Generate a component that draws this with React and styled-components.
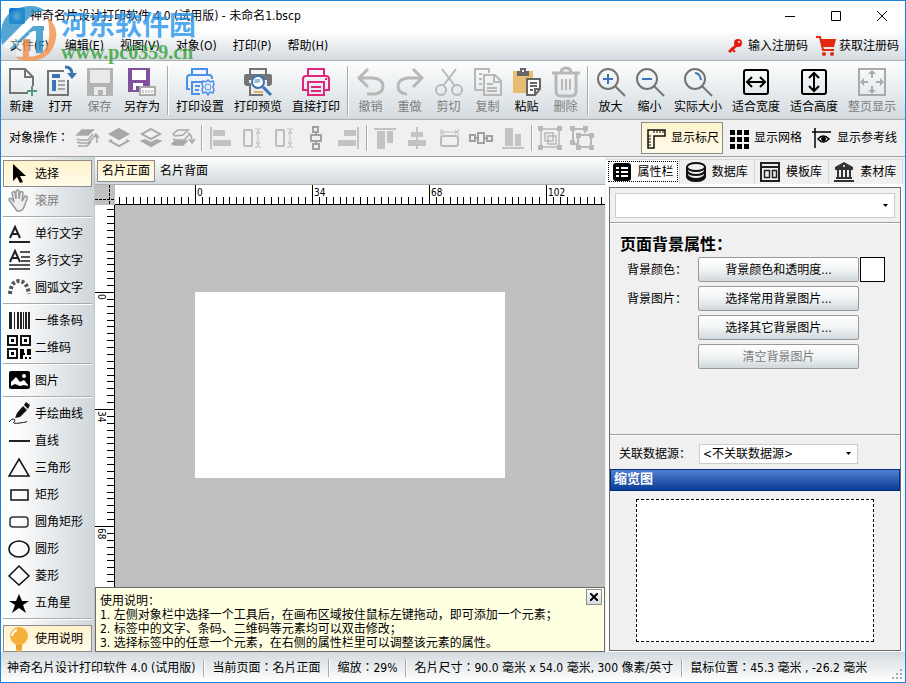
import React from 'react';
import styled, { createGlobalStyle, css } from 'styled-components';

const GlobalStyle = createGlobalStyle`
  * {
    box-sizing: border-box;
  }

  body {
    margin: 0;
    background: #f0f0f0;
  }

  body, button, select {
    font-family: "DejaVu Sans Condensed", "Noto Sans CJK SC", sans-serif;
    font-size: 12px;
    line-height: 16px;
    color: #000;
  }

  button {
    margin: 0;
    padding: 0;
    border: 0;
    background: none;
    white-space: nowrap;
  }

  svg {
    display: block;
    flex: none;
  }
`;

const bar = 'linear-gradient(#fdfefe, #d3dade)';
const picked = css`
  border: 1px solid #8c8c8c;
  background: linear-gradient(#fff3cc, #fffbe9);
`;

/* this family sets the full-width colon in the middle of its cell */
const centredColon = css`
  font-family: "DejaVu Sans Condensed", "Noto Sans CJK TC", sans-serif;
`;

const Window = styled.div`
  position: relative;
  display: flex;
  flex-direction: column;
  min-height: 100vh;
  border: 1px solid #1c83d8;
  background: #f0f0f0;
`;

const TitleBar = styled.header`
  display: flex;
  align-items: center;
  height: 30px;
  padding-left: 8px;
  background: #fff;
`;

const Title = styled.h1`
  flex: 1;
  margin: 0 0 0 5px;
  font-size: 12px;
  font-weight: normal;
  line-height: 16px;
`;

const WindowButton = styled.button`
  display: flex;
  align-items: center;
  justify-content: center;
  width: 46px;
  height: 30px;
`;

const MenuBar = styled.nav`
  display: flex;
  align-items: center;
  gap: 16px;
  height: 30px;
  padding: 0 6px 0 9px;
  border-bottom: 1px solid #adadad;
  background: linear-gradient(#fff, #d3dade);
`;

const Register = styled.div`
  display: flex;
  gap: 8px;
  margin-left: auto;
`;

const RegisterButton = styled.button`
  display: flex;
  align-items: center;
  gap: 3px;
`;

const ToolBar = styled.div`
  display: flex;
  align-items: flex-start;
  height: 59px;
  padding: 7px 0 6px 1px;
  border-bottom: 1px solid #adadad;
  background: ${bar};
`;

const ToolButton = styled.button`
  display: flex;
  flex-direction: column;
  align-items: center;
  gap: 3px;
  width: ${({ $chars }) => ({ 2: 39, 3: 46, 4: 58 })[$chars]}px;

  &:disabled {
    color: #7d7d7d;
  }
`;

const Divider = styled.div`
  align-self: center;
  width: ${({ $width }) => $width}px;
  height: ${({ $height }) => $height}px;
  border-left: 2px solid transparent;
  background: linear-gradient(90deg, #a9a9a9 1px, #fff 1px, #fff 2px, transparent 2px);
  background-clip: padding-box;
`;

const ActionBar = styled.div`
  display: flex;
  align-items: center;
  height: 37px;
  padding: 0 4px 0 8px;
  border-bottom: 1px solid #a0a0a0;
`;

const ActionLabel = styled.span`
  ${centredColon}
  width: 62px;
`;

const ActionButton = styled.button`
  display: flex;
  justify-content: center;
  width: 32px;
`;

const Toggles = styled.div`
  display: flex;
  gap: 1px;
  margin-left: auto;
`;

const Toggle = styled.button`
  display: flex;
  align-items: center;
  gap: 4px;
  height: 32px;
  padding: 0 3px;
  border: 1px solid transparent;
  ${({ $on }) => $on && picked}
`;

const Main = styled.main`
  display: flex;
  flex: 1;
`;

const SideBar = styled.aside`
  display: flex;
  flex-direction: column;
  width: 94px;
  padding: 3px 2px 0;
  border-right: 1px solid #c4c4c4;
  background: linear-gradient(90deg, #fff 10%, #cfd6da);
`;

const SideButton = styled.button`
  display: flex;
  align-items: center;
  gap: 4px;
  height: 27px;
  padding-left: 4px;
  border: 1px solid transparent;
  ${({ $on }) => $on && picked}
  margin-top: ${({ $last }) => ($last ? 'auto' : 0)};

  &:disabled {
    color: #7d7d7d;
  }
`;

const SideDivider = styled.div`
  height: 6px;
  background: linear-gradient(transparent 2px, #aaa 2px, #aaa 3px, #fff 3px, #fff 4px, transparent 4px);
`;

const Workspace = styled.section`
  display: flex;
  flex: 1;
  flex-direction: column;
  min-width: 0;
`;

const PageTabs = styled.div`
  display: flex;
  align-items: center;
  height: 28px;
  padding: 1px 2px 0;
  border-bottom: 1px solid #adadad;
  background: ${bar};
`;

const PageTab = styled.button`
  height: 22px;
  padding: 0 4px;
  border: 1px solid transparent;
  ${({ $on }) => $on && picked}
`;

const Board = styled.div`
  display: grid;
  flex: 1;
  grid-template: 20px 1fr / 20px 1fr;
  background: #c0c0c0;
`;

const RulerBox = styled.div`
  position: relative;
  overflow: hidden;
  background: #fff;
  border: 0 solid #000;
  border-width: ${({ $vertical }) => ($vertical ? '0 1px 0 0' : '0 0 1px')};
`;

/* the ticks run on past the visible end, so they must not size the box */
const Scale = styled.svg`
  position: absolute;
  top: 0;
  left: 0;
  width: 100%;
  height: 100%;
  font-family: "DejaVu Sans Condensed", sans-serif;
  font-size: 10px;
`;

const Canvas = styled.div`
  padding: 87px 100px 0 80px;
`;

const Paper = styled.div`
  height: 186px;
  background: #fff;
`;

const Help = styled.section`
  display: flex;
  justify-content: space-between;
  height: 65px;
  padding: 6px 2px 0 4px;
  border: 1px solid #6b6b6b;
  background: #ffffe1;
  line-height: 14px;
  white-space: nowrap;
`;

const HelpClose = styled.button`
  display: flex;
  align-items: center;
  justify-content: center;
  width: 16px;
  height: 16px;
  margin-top: -5px;
  border: 1px solid #8e8f8f;
  background: ${bar};
`;

const HelpText = styled.div`
  p {
    margin: 0;
  }
`;

const Inspector = styled.aside`
  display: flex;
  flex-direction: column;
  width: 300px;
  padding: 2px 2px 0 1px;
`;

const InspectorTabs = styled.div`
  display: flex;
  height: 25px;
`;

const InspectorTab = styled.button`
  display: flex;
  flex: 1;
  align-items: center;
  justify-content: center;
  gap: 6px;
  border: 1px solid #d9d9d9;
  border-width: 1px 1px 0 0;
  background: #f0f0f0;

  &[aria-selected="true"] {
    outline: 1px dotted #000;
    outline-offset: -3px;
    background: #fff;
  }
`;

const InspectorPage = styled.div`
  display: flex;
  flex: 1;
  padding: 3px 2px 1px 3px;
  background: #fff;
`;

const InspectorBody = styled.div`
  display: flex;
  flex: 1;
  flex-direction: column;
  border: 1px solid #6b6b6b;
  background: #f0f0f0;
`;

const ObjectPicker = styled.div`
  padding: 5px 5px 4px;
  border-bottom: 1px solid #a0a0a0;
`;

const SelectBox = styled.div`
  display: grid;
  align-items: center;
  width: ${({ $width }) => $width};
  height: ${({ $height }) => $height}px;
  border: 1px solid #ccc;
  background: #fff;

  > * {
    grid-area: 1 / 1;
  }

  svg {
    justify-self: end;
    margin-right: 5px;
    pointer-events: none;
  }
`;

const Select = styled.select`
  width: 100%;
  height: 100%;
  padding: 0 3px;
  border: 0;
  background: none;
  appearance: none;
`;

const Properties = styled.div`
  flex: 1;
  padding: 11px 10px 0;
  border-top: 1px solid #fff;
`;

const Heading = styled.h2`
  margin: 0 0 2px;
  font-size: 16px;
  line-height: 20px;
`;

const PropertyGrid = styled.div`
  display: grid;
  grid-template-columns: 70px 161px 25px;
  align-items: center;
  row-gap: 4px;
  column-gap: 1px;
  padding-left: 7px;
`;

const PropertyLabel = styled.label`
  grid-column: 1;
`;

const PushButton = styled.button`
  grid-column: 2;
  height: 25px;
  border: 1px solid #999;
  border-radius: 2px;
  background: linear-gradient(#fff, #f1f4f5 50%, #d0d8dc);

  &:disabled {
    color: #7d7d7d;
  }
`;

const Swatch = styled.button`
  width: 25px;
  height: 25px;
  border: 1px solid #000;
  background: #fff;
`;

const DataSource = styled.div`
  display: flex;
  align-items: center;
  gap: 8px;
  height: 35px;
  padding: 3px 9px 0;
  border-top: 1px solid #a0a0a0;
  box-shadow: inset 0 1px #fff;
`;

const PreviewTitle = styled.h2`
  height: 22px;
  margin: 0;
  padding-left: 3px;
  border: 1px solid #002d80;
  background: linear-gradient(#5080d0, #0a3c96);
  font-size: 13px;
  line-height: 18px;
  color: #fff;
`;

const Preview = styled.div`
  padding: 8px 26px;
`;

const PreviewPaper = styled.div`
  height: 143px;
  border: 1px dashed #000;
  background: #fff;
`;

const StatusBar = styled.footer`
  ${centredColon}
  display: flex;
  align-items: center;
  gap: 6px;
  height: 30px;
  padding: 2px 0 0 6px;
  background: linear-gradient(#d3dade, #fff);
  white-space: nowrap;
`;

const Grip = styled.div`
  align-self: flex-end;
  margin: 0 2px 2px auto;
`;

const Brand = styled.div`
  position: absolute;
  top: 5px;
  left: 0;
  display: flex;
  align-items: center;
  gap: 4px;
  pointer-events: none;
  white-space: nowrap;
`;

const BrandName = styled.div`
  padding-top: 4px;
  font-size: 27px;
  font-weight: bold;
  line-height: 32px;
  color: rgba(36, 146, 232, 0.8);
`;

const BrandSite = styled.div`
  font-family: "Liberation Serif", serif;
  font-size: 20px;
  font-weight: bold;
  line-height: 20px;
  color: rgba(50, 160, 50, 0.8);
`;

const gray = '#747474';
const pale = '#b8b8b8';
const blue = '#3b74b4';

const Printer = ({ color }) => (
  <g fill="none" stroke={color} strokeWidth="2">
    <path d="M6 8V1h16v7" />
    <path d="M6 22H1V11q0-3 3-3h20q3 0 3 3v11h-5" />
  </g>
);

const Magnifier = ({ children }) => (
  <g fill="none" stroke={gray} strokeWidth="2">
    <circle cx="11" cy="11" r="10" />
    <path d="M18 18l10 10" />
    <g stroke={blue}>{children}</g>
  </g>
);

const toolIcons = {
  fresh: (
    <g fill="none" stroke={gray} strokeWidth="2">
      <path d="M20 25H2V1h15l8 8v9M17 1v8h8" />
      <path d="M24 18v10M19 23h10" stroke="#4d9d7c" />
    </g>
  ),
  open: (
    <g fill="none" stroke={gray} strokeWidth="2">
      <path d="M17 3H1v24h20V12" />
      <path d="M5 7h8M5 9h8M6 12v11M8 12v11" stroke={blue} />
      <path d="M11 13h7M11 17h7M11 21h7" stroke="#a6a6a6" />
      <path d="M18-1q7 0 7 7" stroke={blue} strokeWidth="3" />
      <path d="M20 5h10l-5 6z" fill={blue} stroke="none" />
    </g>
  ),
  save: (
    <g fill="#b3b3b3">
      <path d="M1 0h26v28H1z" />
      <path d="M4 2h20v13H4zM8 19h12v8h-3v-5h-5v5H8z" fill="#e8eaeb" />
    </g>
  ),
  saveAs: (
    <g fill="#7f519e">
      <path d="M0 0h22v24H0z" />
      <path d="M4 2h14v10H4zM5 15h10v7h-4v-4H8v4H5z" fill="#fff" />
      <path d="M11 18h17v10H11z" fill="#aaa" />
      <path d="M13 20h13v6H13z" fill="#fff" />
      <path d="M15 22v3M18 22v3M21 22v3M24 22v3" stroke="#999" strokeWidth="1" />
    </g>
  ),
  printSetup: (
    <g fill="none" stroke="#4a91ec" strokeWidth="2">
      <path d="M6 7V1h15v6M14 26H6V14h10M4 21H1V10q0-3 3-3h19q3 0 3 3v1M9 18h5M9 22h4" />
      <path d="M22 12l2 2 3-1 1 3-1 3 1 3-1 3-3-1-2 3-2-3-3 1-1-3 1-3-1-3 1-3 3 1z" strokeWidth="1.500" />
      <circle cx="22" cy="19" r="3" strokeWidth="1" />
    </g>
  ),
  printPreview: (
    <g fill="none" stroke={gray}>
      <path d="M2 6h24q2 0 2 2v8l-2 2h-3v-6H5v6H2l-2-2V8q0-2 2-2z" fill={gray} stroke="none" />
      <path d="M6 8V1h16v7M6 15v12h13" strokeWidth="2" />
      <path d="M10 24h9" stroke="#e5b467" strokeWidth="2" />
      <circle cx="14" cy="14" r="6" fill="#fff" stroke={blue} strokeWidth="2" />
      <path d="M11 11h6l-2 4h-5z" fill="#9bbad8" stroke="none" />
      <path d="M19 19l8 8" stroke={blue} strokeWidth="3" />
    </g>
  ),
  print: (
    <g>
      <Printer color="#e1257f" />
      <path d="M6 14h16v13H6zM9 19h10M9 23h10" fill="none" stroke="#e1257f" strokeWidth="2" />
      <path d="M23 11h2" stroke="#e1257f" strokeWidth="2" />
    </g>
  ),
  undo: <path d="M11 1L2 10l9 9M3 10h13q10 1 10 8t-8 8h-8" fill="none" stroke={pale} strokeWidth="3" />,
  redo: <path d="M17 1l9 9-9 9M25 10H12Q2 11 2 18t8 8h1" fill="none" stroke={pale} strokeWidth="3" />,
  cut: (
    <g fill="none" stroke={pale} strokeWidth="2">
      <path d="M7 1l13 17M21 1L8 18" />
      <circle cx="6" cy="22" r="5" />
      <circle cx="22" cy="22" r="5" />
    </g>
  ),
  copy: (
    <g fill="none" stroke={pale} strokeWidth="2">
      <path d="M9 22H1V1h14v4M5 6h3M5 11h3M5 16h3" />
      <path d="M10 7h11l6 6v14H10zM20 7v7h7M13 16h6M13 20h10M13 23h10" />
    </g>
  ),
  paste: (
    <g>
      <path d="M0 3h20v22H0z" fill="#e8bd72" />
      <path d="M4 3h3V0h6v3h3v5H4z" fill="#666" />
      <path d="M9 2h2v2H9z" fill="#fff" />
      <path d="M14 11h13v10l-5 6h-8z" fill="#fff" stroke="#666" strokeWidth="2" />
      <path d="M17 15h7M17 18h7M17 22h3M22 27v-6h5" fill="none" stroke="#666" strokeWidth="2" />
    </g>
  ),
  trash: (
    <g fill="none" stroke={pale} strokeWidth="3">
      <path d="M0 5h28M9 5q0-5 5-5t5 5M4 6v17q0 5 5 5h10q5 0 5-5V6" />
      <path d="M10 11v11M14 11v11M18 11v11" strokeWidth="2" />
    </g>
  ),
  zoomIn: <Magnifier><path d="M6 11h10M11 6v10" /></Magnifier>,
  zoomOut: <Magnifier><path d="M6 11h10" /></Magnifier>,
  actual: <Magnifier><path d="M11 5q5 0 6 7" /></Magnifier>,
  fitWidth: (
    <g fill="none" stroke="#000" strokeWidth="2">
      <rect x="2" y="2" width="24" height="24" rx="2" />
      <path d="M6 14h16M10 9l-5 5 5 5M18 9l5 5-5 5" />
    </g>
  ),
  fitHeight: (
    <g fill="none" stroke="#000" strokeWidth="2">
      <rect x="2" y="2" width="24" height="24" rx="2" />
      <path d="M14 6v16M9 10l5-5 5 5M9 18l5 5 5-5" />
    </g>
  ),
  fitPage: (
    <g fill="none" stroke="#aaa" strokeWidth="2">
      <path d="M1 1h26v26H1z" />
      <path d="M14 4v6M14 18v6M4 14h6M18 14h6" />
      <path d="M14 2l4 4h-8zM14 26l4-4h-8zM2 14l4-4v8zM26 14l-4-4v8z" fill="#aaa" stroke="none" />
    </g>
  ),
};

const actionIcons = {
  front: (
    <g fill="none" stroke="#a8a8a8" strokeWidth="1.500">
      <path d="M2 9l5-5h11l-5 5z" fill="#a8a8a8" />
      <path d="M2 13l3 1h8l5-6M2 16l3 1h8l5-5M3 20h9l4-4M22 17q0-5-1-8M18 12l3-4 3 4" />
    </g>
  ),
  forward: (
    <g fill="none" stroke="#a8a8a8" strokeWidth="2">
      <path d="M12 3l9 5-9 5-9-5z" fill="#a8a8a8" />
      <path d="M5 14l-2 1 9 5 9-5-2-1" />
    </g>
  ),
  backward: (
    <g fill="none" stroke="#a8a8a8" strokeWidth="2">
      <path d="M12 3l9 5-9 5-9-5z" />
      <path d="M3 15l3-1 6 3 6-3 3 1-9 5z" fill="#a8a8a8" />
    </g>
  ),
  back: (
    <g fill="none" stroke="#a8a8a8" strokeWidth="1.500">
      <path d="M2 8l5-4h10l-5 5-8 1zM2 13l3 1h8l5-5" />
      <path d="M1 18l3-3h12l-4 4H4z" fill="#a8a8a8" />
      <path d="M17 7q4 2 4 8M18 13l3 4 3-4" />
    </g>
  ),
  left: <path d="M2 1h2v22H2zM5 4h12v6H5zM5 14h18v6H5z" fill="#c3c3c3" />,
  sameWidth: (
    <g fill="none" stroke="#bcbcbc">
      <rect x="4" y="4" width="8" height="16" rx="1" strokeWidth="2" />
      <path d="M18 4v16M15 3h6M15 21h6M16 8l2-3 2 3M16 16l2 3 2-3" />
    </g>
  ),
  middleV: (
    <path d="M9 1h5v5H9zM7 9h10v6H7zM9 18h6v5H9zM12 6v3M12 15v3" fill="none" stroke="#a0a0a0" strokeWidth="2" />
  ),
  right: <path d="M21 1h2v22h-2zM8 4h12v6H8zM2 14h18v6H2z" fill="#c3c3c3" />,
  top: <path d="M1 2h22v2H1zM4 5h8v18H4zM14 5h6v12h-6z" fill="#c3c3c3" />,
  center: <path d="M11 1h2v22h-2zM6 6h12v5H6zM3 14h18v6H3z" fill="#c3c3c3" />,
  sameHeight: (
    <g fill="none" stroke="#bbb">
      <rect x="4" y="10" width="17" height="10" rx="2" strokeWidth="2" />
      <path d="M4 3v6M21 3v6M5 6h15M7 4L5 6l2 2M18 4l2 2-2 2" />
    </g>
  ),
  middleH: (
    <path d="M1 9h5v6H1zM9 7h6v10H9zM18 10h5v5h-5zM6 12h3M15 12h3" fill="none" stroke="#a0a0a0" strokeWidth="2" />
  ),
  bottom: <path d="M1 21h22v2H1zM4 2h8v18H4zM14 8h6v12h-6z" fill="#c3c3c3" />,
  group: (
    <g fill="none" stroke={pale}>
      <path d="M3 3h18v18H3zM7 7h8v8H7zM10 10h8v8h-8z" strokeWidth="1.500" />
      <path d="M0 0h5v5H0zM19 0h5v5h-5zM0 19h5v5H0zM19 19h5v5h-5z" fill={pale} stroke="none" />
    </g>
  ),
  ungroup: (
    <g fill="none" stroke={pale} strokeWidth="2">
      <path d="M7 18H3V3h12v4M8 9h13v12H8z" />
      <path d="M0 0h5v5H0zM13 0h5v5h-5zM0 14h5v5H0zM6 7h5v5H6zM19 7h5v5h-5zM6 19h5v5H6zM19 19h5v5h-5z" fill={pale} stroke="none" />
    </g>
  ),
};

const toggleIcons = {
  ruler: (
    <g fill="none" stroke="#111">
      <path d="M3 3h17v6H9v12H3z" strokeWidth="1.500" />
      <path d="M9 3v3M12 3v3M15 3v3M18 3v3M3 9h3M3 12h3M3 15h3M3 18h3" />
    </g>
  ),
  grid: <path d="M2 3h5v5H2zM9 3h5v5H9zM16 3h5v5h-5zM2 10h5v5H2zM9 10h5v5H9zM16 10h5v5h-5zM2 17h5v5H2zM9 17h5v5H9zM16 17h5v5h-5z" />,
  guide: (
    <g fill="none" stroke="#000">
      <path d="M1 5h19" strokeWidth="1.500" />
      <path d="M4 1v20" strokeWidth="1.500" />
      <path d="M7 12q5-6 11 0-6 6-11 0z" strokeWidth="1.500" />
      <circle cx="12.500" cy="12" r="2" fill="#000" />
    </g>
  ),
};

const QrCorner = ({ x, y }) => (
  <g transform={`translate(${x} ${y})`}>
    <path d="M1 1h9v9H1z" fill="none" stroke="#111" strokeWidth="2" />
    <path d="M4 4h3v3H4z" />
  </g>
);

const sideIcons = {
  select: <path d="M5 2v17l4-4 3 6 3-1-3-6h6z" />,
  pan: (
    <path
      d="M7 19L1 11q0-3 3-1l2 3-2-9q2-3 3 0l1 6V2q2-2 3 0v8l1-7q3-1 3 1l-1 8 3-5q3 0 2 3l-3 8q-1 3-4 4H9z"
      fill="#eee"
      stroke="#999"
      strokeWidth="1.500"
    />
  ),
  text: (
    <g fill="none" stroke="#222" strokeWidth="2">
      <path d="M2 16L7 5l5 11M4 12h6" />
      <path d="M1 20h21" />
    </g>
  ),
  lines: (
    <g fill="none" stroke="#222">
      <path d="M2 13L7 2l5 11M4 9h6" strokeWidth="2" />
      <path d="M12 3h10M13 8h9M13 12h9M1 16h21M1 20h21" strokeWidth="1.500" />
    </g>
  ),
  arc: <path d="M2 18Q3 5 11 5t10 13" fill="none" stroke="#555" strokeWidth="4" strokeDasharray="3 2" />,
  barcode: (
    <path d="M1 3h3v17H1zM6 3h1v17H6zM9 3h2v17H9zM12 3h2v17h-2zM15 3h1v17h-1zM17 3h2v17h-2zM20 3h2v17h-2z" fill="#222" />
  ),
  qr: (
    <g>
      <QrCorner x="-1" y="-1" />
      <QrCorner x="12" y="-1" />
      <QrCorner x="-1" y="12" />
      <path d="M12 13h4v4h3v-4h4v6h-4v-2h-2v2h-2v4h-3zM17 21h2v2h-2zM21 21h2v2h-2z" />
    </g>
  ),
  image: (
    <g>
      <rect x="1" y="2" width="21" height="18" rx="2" />
      <path d="M3 17v-4l5-5 4 5 4-2 4 5v1l-4-1-4 1-5-2z" fill="#fff" />
      <circle cx="16" cy="7" r="2" fill="#fff" />
    </g>
  ),
  brush: (
    <g fill="#111">
      <path d="M7 16l2-5 6-7 4 4-7 7zM16 3l2-3 4 3-2 4z" />
      <path d="M1 20q3-4 5-3t0 3 6 1 7-2" fill="none" stroke="#111" />
    </g>
  ),
  line: <path d="M1 12h21" stroke="#222" strokeWidth="2" />,
  triangle: <path d="M11 3l10 17H1z" fill="none" stroke="#111" strokeWidth="1.500" />,
  rect: <path d="M3 7h17v10H3z" fill="none" stroke="#111" strokeWidth="1.500" />,
  roundRect: <rect x="2" y="7" width="18" height="10" rx="3" fill="none" stroke="#333" strokeWidth="1.500" />,
  circle: <ellipse cx="11" cy="12" rx="10" ry="8" fill="none" stroke="#111" strokeWidth="1.500" />,
  diamond: <path d="M11 2l10 10-10 9L1 12z" fill="none" stroke="#111" strokeWidth="1.500" />,
  star: <path d="M11 3l3 7h7l-6 4 3 8-7-5-7 5 3-8-6-4h7z" />,
  bulb: (
    <g fill="#f6b03c">
      <circle cx="11" cy="9" r="9" />
      <path d="M6 14h10l-2 5H8zM8 19h6v4l-2 2h-2l-2-2z" />
      <path d="M4 9q1-5 5-6" fill="none" stroke="#fff" strokeWidth="2" />
      <path d="M8 19h6M8 21h6" stroke="#d99428" />
    </g>
  ),
};

const tabIcons = {
  list: (
    <g>
      <rect x="1" y="1" width="18" height="18" rx="3" />
      <path d="M4 6h3M9 6h7M4 10h3M9 10h7M4 14h3M9 14h7" stroke="#fff" strokeWidth="2" />
    </g>
  ),
  database: (
    <g fill="none" stroke="#111" strokeWidth="2">
      <ellipse cx="10" cy="5" rx="9" ry="4" />
      <path d="M1 5v10q1 4 9 4t9-4V5M1 9q2 4 9 4t9-4M1 13q2 4 9 4t9-4" />
    </g>
  ),
  template: (
    <g fill="none" stroke="#222">
      <path d="M1 1h18v18H1zM1 5h18" strokeWidth="2" />
      <path d="M4.500 8.500h5v7h-5zM12.500 8.500h4v7h-4z" strokeWidth="1.500" />
    </g>
  ),
  bank: (
    <g fill="#333">
      <path d="M10 0l9 5v3H1V5zM2 15h16v2H2zM0 18h20v2H0z" />
      <path d="M4 8v7M8 8v7M12 8v7M16 8v7" stroke="#333" strokeWidth="2" />
      <circle cx="10" cy="4" r="1" fill="#fff" />
    </g>
  ),
};

const Icon = ({ size, children }) => (
  <svg width={size} height={size} viewBox={`0 0 ${size} ${size}`} overflow="visible" aria-hidden="true">
    {children}
  </svg>
);

const Caret = () => (
  <svg width="7" height="4" viewBox="0 0 7 4">
    <path d="M1 0h5L3.500 3z" />
  </svg>
);

const toolGroups = [
  [['fresh', '新建'], ['open', '打开'], ['save', '保存', true], ['saveAs', '另存为']],
  [['printSetup', '打印设置'], ['printPreview', '打印预览'], ['print', '直接打印']],
  [
    ['undo', '撤销', true],
    ['redo', '重做', true],
    ['cut', '剪切', true],
    ['copy', '复制', true],
    ['paste', '粘贴'],
    ['trash', '删除', true],
  ],
  [
    ['zoomIn', '放大'],
    ['zoomOut', '缩小'],
    ['actual', '实际大小'],
    ['fitWidth', '适合宽度'],
    ['fitHeight', '适合高度'],
    ['fitPage', '整页显示', true],
  ],
];

const actionGroups = [
  [['front', '移到最前'], ['forward', '上移一层'], ['backward', '下移一层'], ['back', '移到最后']],
  [['left', '左对齐'], ['sameWidth', '等高'], ['sameWidth', '等间距'], ['middleV', '垂直分布'], ['right', '右对齐']],
  [['top', '顶对齐'], ['center', '居中'], ['sameHeight', '等宽'], ['middleH', '水平分布'], ['bottom', '底对齐']],
  [['group', '组合'], ['ungroup', '取消组合']],
];

const sideGroups = [
  [['select', '选择'], ['pan', '滚屏', true]],
  [['text', '单行文字'], ['lines', '多行文字'], ['arc', '圆弧文字']],
  [['barcode', '一维条码'], ['qr', '二维码']],
  [['image', '图片']],
  [
    ['brush', '手绘曲线'],
    ['line', '直线'],
    ['triangle', '三角形'],
    ['rect', '矩形'],
    ['roundRect', '圆角矩形'],
    ['circle', '圆形'],
    ['diamond', '菱形'],
    ['star', '五角星'],
  ],
];

const statusItems = [
  '神奇名片设计打印软件 4.0 (试用版)',
  '当前页面：名片正面',
  '缩放：29%',
  '名片尺寸：90.0 毫米 x 54.0 毫米, 300 像素/英寸',
  '鼠标位置：45.3 毫米 , -26.2 毫米',
];

const MAJOR = 117;
const PER_MAJOR = 17;

const Ruler = ({ vertical, origin, labels }) => {
  const ticks = [];
  for (let i = -12; i < 300; i += 1) {
    const at = origin + Math.round((i * MAJOR) / PER_MAJOR);
    const major = i >= 0 && i % PER_MAJOR === 0;
    ticks.push({ i, at, major });
  }
  return (
    <RulerBox $vertical={vertical}>
      <Scale shapeRendering="crispEdges">
        {ticks.map(({ i, at, major }) => (
          <g key={i}>
            {vertical
              ? <rect x={major ? 0 : 12} y={at} width="20" height="1" />
              : <rect x={at} y={major ? 0 : 12} width="1" height="20" />}
            {major && i < labels * PER_MAJOR && (
              <text transform={vertical ? `translate(3 ${at + 2}) rotate(90)` : `translate(${at + 2} 11)`}>
                {i * 2}
              </text>
            )}
          </g>
        ))}
      </Scale>
    </RulerBox>
  );
};

const Groups = ({ groups, divider, render }) =>
  groups.map((group, index) => (
    <React.Fragment key={index}>
      {index > 0 && divider}
      {group.map(render)}
    </React.Fragment>
  ));

export default () => (
  <Window>
    <GlobalStyle />
    <TitleBar>
      <svg width="16" height="16" viewBox="0 0 16 16">
        <rect width="16" height="16" rx="2" fill="#1274d8" />
        <circle cx="8" cy="8" r="5" fill="#6cb8f0" />
        <path d="M6 6h4v3l-2 3-2-3z" fill="#fff" />
      </svg>
      <Title>神奇名片设计打印软件 4.0 (试用版) - 未命名1.bscp</Title>
      <WindowButton aria-label="最小化">
        <svg width="10" height="10"><path d="M0 5.500h10" stroke="#000" /></svg>
      </WindowButton>
      <WindowButton aria-label="最大化">
        <svg width="10" height="10"><path d="M.5.5h9v9h-9z" fill="none" stroke="#000" /></svg>
      </WindowButton>
      <WindowButton aria-label="关闭">
        <svg width="10" height="10"><path d="M0 0l10 10M10 0L0 10" stroke="#000" /></svg>
      </WindowButton>
    </TitleBar>

    <MenuBar>
      {['文件(F)', '编辑(E)', '视图(V)', '对象(O)', '打印(P)', '帮助(H)'].map(name => (
        <button key={name}>{name}</button>
      ))}
      <Register>
        <RegisterButton>
          <svg width="18" height="16" viewBox="0 0 18 16">
            <path d="M2 14l9-8" stroke="#e8190c" strokeWidth="3" />
            <path d="M4 10l4 4" stroke="#e8190c" strokeWidth="2" />
            <circle cx="11" cy="5" r="4" fill="#e8190c" />
            <circle cx="12" cy="4" r="1" fill="#fff" />
          </svg>
          输入注册码
        </RegisterButton>
        <RegisterButton>
          <svg width="20" height="20" viewBox="0 0 20 20">
            <path d="M0 1h4l3 13h11" fill="none" stroke="#e02a10" strokeWidth="2" />
            <path d="M4 3h16l-2 8H6z" fill="#e02a10" />
            <circle cx="8" cy="18" r="2" fill="#e02a10" />
            <circle cx="16" cy="18" r="2" fill="#e02a10" />
          </svg>
          获取注册码
        </RegisterButton>
      </Register>
    </MenuBar>

    <ToolBar>
      <Groups
        groups={toolGroups}
        divider={<Divider $width={6} $height={49} />}
        render={([icon, name, off]) => (
          <ToolButton key={name} $chars={name.length} disabled={off}>
            <Icon size={28}>{toolIcons[icon]}</Icon>
            {name}
          </ToolButton>
        )}
      />
    </ToolBar>

    <ActionBar>
      <ActionLabel>对象操作：</ActionLabel>
      <Groups
        groups={actionGroups}
        divider={<Divider $width={5} $height={26} />}
        render={([icon, name]) => (
          <ActionButton key={name} aria-label={name} disabled>
            <Icon size={24}>{actionIcons[icon]}</Icon>
          </ActionButton>
        )}
      />
      <Toggles>
        <Toggle $on aria-pressed="true"><Icon size={22}>{toggleIcons.ruler}</Icon>显示标尺</Toggle>
        <Toggle aria-pressed="false"><Icon size={22}>{toggleIcons.grid}</Icon>显示网格</Toggle>
        <Toggle aria-pressed="false"><Icon size={22}>{toggleIcons.guide}</Icon>显示参考线</Toggle>
      </Toggles>
    </ActionBar>

    <Main>
      <SideBar>
        <Groups
          groups={sideGroups}
          divider={<SideDivider />}
          render={([icon, name, off]) => (
            <SideButton key={name} $on={icon === 'select'} disabled={off}>
              <Icon size={23}>{sideIcons[icon]}</Icon>
              {name}
            </SideButton>
          )}
        />
        <SideDivider />
        <SideButton $on $last>
          <Icon size={23}>{sideIcons.bulb}</Icon>
          使用说明
        </SideButton>
      </SideBar>

      <Workspace>
        <PageTabs role="tablist">
          <PageTab $on role="tab" aria-selected="true">名片正面</PageTab>
          <PageTab role="tab" aria-selected="false">名片背面</PageTab>
        </PageTabs>
        <Board>
          <svg width="20" height="20">
            <path d="M14.500 0v20M0 14.500h20" stroke="#000" strokeDasharray="3 1" />
          </svg>
          <Ruler origin={80} labels={4} />
          <Ruler vertical origin={87} labels={3} />
          <Canvas><Paper /></Canvas>
        </Board>
        <Help>
          <HelpText>
            <p>使用说明：</p>
            <p>1. 左侧对象栏中选择一个工具后，在画布区域按住鼠标左键拖动，即可添加一个元素；</p>
            <p>2. 标签中的文字、条码、二维码等元素均可以双击修改；</p>
            <p>3. 选择标签中的任意一个元素，在右侧的属性栏里可以调整该元素的属性。</p>
          </HelpText>
          <HelpClose aria-label="关闭说明">
            <svg width="8" height="8"><path d="M0 0l8 8M8 0L0 8" stroke="#000" strokeWidth="2" /></svg>
          </HelpClose>
        </Help>
      </Workspace>

      <Inspector>
        <InspectorTabs role="tablist">
          {[['list', '属性栏'], ['database', '数据库'], ['template', '模板库'], ['bank', '素材库']].map(([icon, name]) => (
            <InspectorTab key={name} role="tab" aria-selected={icon === 'list'}>
              <Icon size={20}>{tabIcons[icon]}</Icon>
              {name}
            </InspectorTab>
          ))}
        </InspectorTabs>
        <InspectorPage>
          <InspectorBody>
            <ObjectPicker>
              <SelectBox $width="100%" $height={25}>
                <Select aria-label="对象"><option /></Select>
                <Caret />
              </SelectBox>
            </ObjectPicker>
            <Properties>
              <Heading>页面背景属性：</Heading>
              <PropertyGrid>
                <PropertyLabel htmlFor="color">背景颜色：</PropertyLabel>
                <PushButton id="color">背景颜色和透明度...</PushButton>
                <Swatch aria-label="当前颜色" />
                <PropertyLabel htmlFor="picture">背景图片：</PropertyLabel>
                <PushButton id="picture">选择常用背景图片...</PushButton>
                <PushButton>选择其它背景图片...</PushButton>
                <PushButton disabled>清空背景图片</PushButton>
              </PropertyGrid>
            </Properties>
            <DataSource>
              <label htmlFor="source">关联数据源：</label>
              <SelectBox $width="159px" $height={20}>
                <Select id="source"><option>&lt;不关联数据源&gt;</option></Select>
                <Caret />
              </SelectBox>
            </DataSource>
            <PreviewTitle>缩览图</PreviewTitle>
            <Preview><PreviewPaper /></Preview>
          </InspectorBody>
        </InspectorPage>
      </Inspector>
    </Main>

    <StatusBar>
      {statusItems.map((item, index) => (
        <React.Fragment key={item}>
          {index > 0 && <Divider $width={5} $height={18} />}
          <span>{item}</span>
        </React.Fragment>
      ))}
      <Grip>
        <svg width="11" height="11" fill="#aaa">
          <path d="M8 0h2v2H8zM4 4h2v2H4zM8 4h2v2H8zM0 8h2v2H0zM4 8h2v2H4zM8 8h2v2H8z" />
        </svg>
      </Grip>
    </StatusBar>

    <Brand>
      <svg width="56" height="56" viewBox="0 0 56 56" opacity="0.8">
        <path d="M1 39Q-4 12 15 3q17-7 30 2-10-1-16 6L2 38z" fill="#2c8fc9" />
        <path d="M8 43l24-23h11v5H32L12 43z" fill="#2c8fc9" />
        <path d="M35 24h7v23h-7z" fill="#2c8fc9" />
        <path d="M2 40L30 14h17v6H32L8 44z" fill="#fff" opacity="0.5" />
        <path d="M28 26h6v24h-6zM15 36h6v14h-6z" fill="#fff" opacity="0.5" />
        <path d="M46 10q11 10 9 22-3 18-19 22-12 3-22-3h8V33h6v18q18-1 20-19 1-12-2-22z" fill="#f5924a" />
      </svg>
      <div>
        <BrandName>河东软件园</BrandName>
        <BrandSite>www.pc0359.cn</BrandSite>
      </div>
    </Brand>
  </Window>
);
